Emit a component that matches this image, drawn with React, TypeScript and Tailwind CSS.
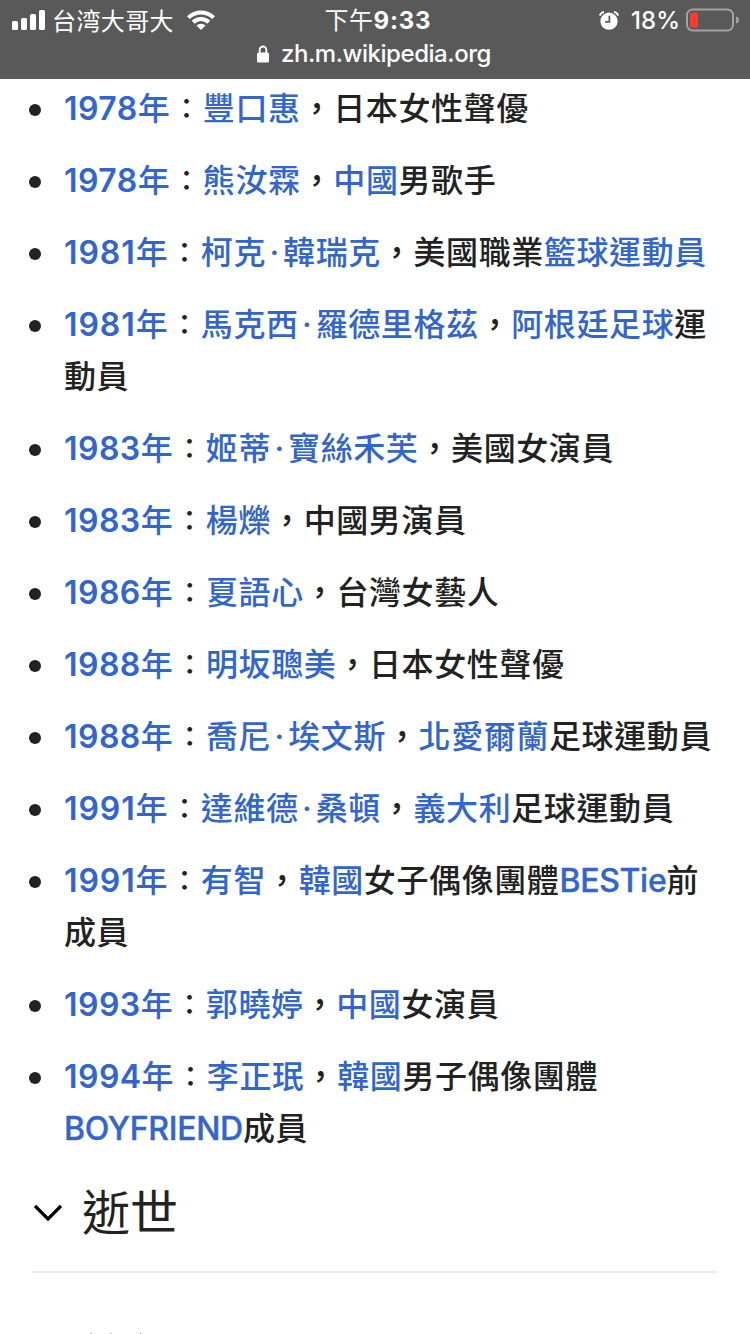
import { Fragment } from 'react'
import type { ReactNode } from 'react'

type Entry = {
  year: string
  // Text wrapped in [ ] is rendered as a link
  text: string
}

const entries: Entry[] = [
  { year: '1978', text: '[豐口惠]，日本女性聲優' },
  { year: '1978', text: '[熊汝霖]，[中國]男歌手' },
  { year: '1981', text: '[柯克·韓瑞克]，美國職業[籃球運動員]' },
  { year: '1981', text: '[馬克西·羅德里格茲]，[阿根廷足球]運動員' },
  { year: '1983', text: '[姬蒂·寶絲禾芙]，美國女演員' },
  { year: '1983', text: '[楊爍]，中國男演員' },
  { year: '1986', text: '[夏語心]，台灣女藝人' },
  { year: '1988', text: '[明坂聰美]，日本女性聲優' },
  { year: '1988', text: '[喬尼·埃文斯]，[北愛爾蘭]足球運動員' },
  { year: '1991', text: '[達維德·桑頓]，[義大利]足球運動員' },
  { year: '1991', text: '[有智]，[韓國]女子偶像團體[BESTie]前成員' },
  { year: '1993', text: '[郭曉婷]，[中國]女演員' },
  { year: '1994', text: '[李正珉]，[韓國]男子偶像團體[BOYFRIEND]成員' },
]

export default function App() {
  return (
    <div
      lang="zh-Hant"
      className="flex h-[1334px] w-[750px] flex-col overflow-hidden bg-white font-['Inter','Noto_Sans_CJK_TC',sans-serif] text-[#222222]"
    >
      <StatusBar />
      <main className="flex flex-1 flex-col pt-1">
        <ul className="flex flex-col gap-5 pl-[29px] pr-8">
          {entries.map((entry) => (
            <li key={entry.year + entry.text} className="flex text-[32px] leading-[52px] font-medium">
              <span className="mt-[21px] h-3 w-3 shrink-0 rounded-full bg-[#222222]" />
              <p className="ml-[23px] flex-1 tracking-[0.6px]">
                <Link>
                  <Year value={entry.year} />年
                </Link>
                <span className="relative -top-px inline-block w-[32.6px] text-center text-[28px] leading-none font-medium tracking-normal">
                  ：
                </span>
                {renderText(entry.text)}
              </p>
            </li>
          ))}
        </ul>
        <SectionHeading title="逝世" />
        <NextRowEdge />
      </main>
    </div>
  )
}

function Link({ children }: { children: ReactNode }) {
  return <a className="text-[#3366cc]">{children}</a>
}

function Year({ value }: { value: string }) {
  return (
    <span className={`font-semibold ${value.endsWith('1') ? 'tracking-[0.9px]' : 'tracking-[0.45px]'}`}>{value}</span>
  )
}

function renderText(text: string) {
  return text.split(/(\[[^\]]+\])/).map((part, i) => {
    if (!part.startsWith('[')) return <Fragment key={i}>{part}</Fragment>
    const label = part.slice(1, -1)
    if (/^[A-Za-z]+$/.test(label)) {
      return (
        <Link key={i}>
          <span className="tracking-[-0.3px] [-webkit-text-stroke:0.4px]">{label}</span>
        </Link>
      )
    }
    const names = label.split('·')
    return (
      <Link key={i}>
        {names[0]}
        {names.length > 1 && (
          <>
            <span className="inline-block w-[17px] text-center">·</span>
            {names[1]}
          </>
        )}
      </Link>
    )
  })
}

function SectionHeading({ title }: { title: string }) {
  return (
    <div className="mx-8 mt-5 flex h-[98px] items-center border-b-2 border-[#eaecf0] pb-[21px]">
      <svg className="ml-0.5 h-7 w-7" viewBox="0 0 28 28" fill="none" stroke="#000" strokeWidth="3.2">
        <path d="M1 7 14 20 27 7" />
      </svg>
      <h2 className="ml-5 text-[48px] leading-[64px] font-normal">{title}</h2>
    </div>
  )
}

// Top pixels of the row cut off by the bottom of the screen
function NextRowEdge() {
  return (
    <div className="mt-auto flex h-px gap-[18px] pl-[90px]">
      <span className="w-0.5 bg-[#b5b5b5]" />
      <span className="w-0.5 bg-[#c4c4c4]" />
      <span className="ml-2.5 w-px bg-[#777777]" />
    </div>
  )
}

function StatusBar() {
  return (
    <header className="h-[79px] shrink-0 bg-[#595959] text-white">
      <div className="grid h-10 grid-cols-3 items-center">
        <div className="flex items-center pl-3">
          <svg className="h-5 w-[33px]" viewBox="0 0 33 20" fill="#fff">
            <rect x="0" y="11" width="6" height="9" rx="1.5" />
            <rect x="9" y="8" width="6" height="12" rx="1.5" />
            <rect x="18" y="4" width="6" height="16" rx="1.5" />
            <rect x="27" y="0" width="6" height="20" rx="1.5" />
          </svg>
          <span
            lang="zh-Hans"
            className="ml-[7px] font-['Noto_Sans_CJK_SC',sans-serif] text-[24px] tracking-[0.4px]"
          >
            台湾大哥大
          </span>
          <svg className="ml-[13px] h-5 w-7" viewBox="0 0 28 20" fill="none" stroke="#fff" strokeWidth="4">
            <path d="M1.4 7.6a18 18 0 0 1 25.2 0" />
            <path d="M6.2 12.2a11.2 11.2 0 0 1 15.6 0" />
            <path d="M14 20 9.5 15.5a6.4 6.4 0 0 1 9 0Z" fill="#fff" stroke="none" />
          </svg>
        </div>
        <div className="flex items-center justify-center pt-0.5 pl-1.5 text-[24px]">
          <span className="tracking-[0.5px]">下午</span>
          <span className="font-bold tracking-[0.8px]">9:33</span>
        </div>
        <div className="flex items-center justify-end pr-2.5">
          <svg className="h-[19px] w-5" viewBox="0 0 20 19">
            <circle cx="10" cy="10.2" r="8.6" fill="#fff" />
            <path d="M.8 4.6A5.5 5.5 0 0 1 5 .9M19.2 4.6A5.5 5.5 0 0 0 15 .9" fill="none" stroke="#fff" strokeWidth="1.8" />
            <path d="M10.4 4.8v6H6.2" fill="none" stroke="#595959" strokeWidth="1.8" />
          </svg>
          <span className="ml-3 pt-0.5 text-[24px] font-medium">18%</span>
          <svg className="ml-1.5 h-6 w-[54px]" viewBox="0 0 54 24">
            <rect x="1" y="1.5" width="46" height="21" rx="5.5" fill="none" stroke="#a3a3a3" strokeWidth="2" />
            <rect x="4" y="4.5" width="8" height="15" rx="2" fill="#ff3b30" />
            <path d="M50 8.5c4 1 4 6 0 7Z" fill="#a3a3a3" />
          </svg>
        </div>
      </div>
      <div className="flex h-7 items-center justify-center pr-0.5 text-[24px] font-medium tracking-[-0.45px]">
        <svg className="mr-3 h-[18px] w-3" viewBox="0 0 12 18">
          <path d="M2.7 8V4.8a3.3 3.3 0 0 1 6.6 0V8" fill="none" stroke="#fff" strokeWidth="1.8" />
          <rect x="0" y="7.5" width="12" height="10" rx="1.5" fill="#fff" />
        </svg>
        zh.m.wikipedia.org
      </div>
    </header>
  )
}
